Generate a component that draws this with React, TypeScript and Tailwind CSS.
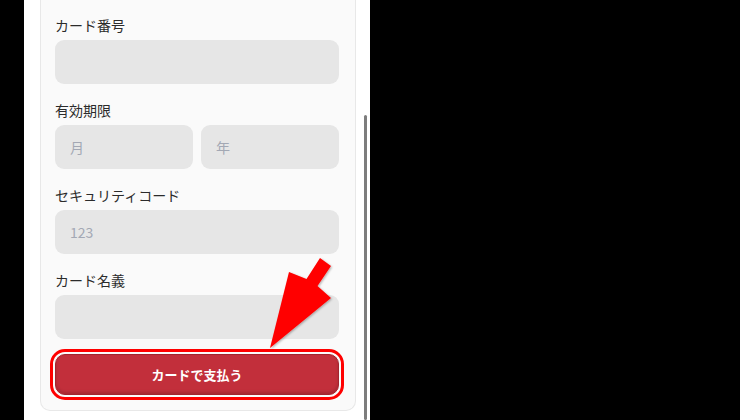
import * as React from "react";

const font = { fontFamily: '"Noto Sans CJK JP", "Noto Sans", sans-serif' };

function Field({ label, children }: { label: string; children: React.ReactNode }) {
  return (
    <div className="mb-4">
      <div className="mb-[5px] h-5 text-[14px] leading-5 text-[#2b2b2b]">{label}</div>
      {children}
    </div>
  );
}

function Input({ placeholder }: { placeholder?: string }) {
  return (
    <input
      className="h-11 w-full rounded-[9px] bg-[#e6e6e6] px-[15px] text-[14px] text-[#333] outline-none placeholder:text-[#a3a8b4]"
      placeholder={placeholder}
      style={font}
    />
  );
}

function Arrow() {
  return (
    <svg className="pointer-events-none absolute left-0 top-0" width="740" height="420">
      <defs>
        <filter id="sh" x="-20%" y="-20%" width="140%" height="140%">
          <feDropShadow dx="1" dy="1" stdDeviation="1" floodColor="#000" floodOpacity="0.3" />
        </filter>
      </defs>
      <polygon
        points="320,258 331,266 317.5,286 331,298 270,348 289,272 306.5,279"
        fill="#ff0000"
        filter="url(#sh)"
      />
    </svg>
  );
}

export default function App() {
  return (
    <div className="relative flex h-[420px] w-[740px] overflow-hidden bg-black" style={font}>
      <div className="ml-6 flex h-full w-[346px] bg-white">
        <div className="ml-4 w-[316px] self-start rounded-b-[10px] border-x border-b border-[#e8e8e8] bg-[#fafafa] pb-[15px] pl-[14px] pr-[16px] pt-[15px]">
          <Field label="カード番号">
            <Input />
          </Field>
          <Field label="有効期限">
            <div className="flex gap-2">
              <Input placeholder="月" />
              <Input placeholder="年" />
            </div>
          </Field>
          <Field label="セキュリティコード">
            <Input placeholder="123" />
          </Field>
          <Field label="カード名義">
            <Input />
          </Field>
          <button
            className="mt-[-1px] flex h-[41px] w-full items-center justify-center rounded-[10px] border border-[#a3242e] bg-[#c22f3b] text-[13px] font-bold text-white shadow-[inset_0_-2px_3px_rgba(0,0,0,0.15)] outline-[3px] outline-offset-[2px] outline-[#ff0000] outline-solid"
            style={font}
          >
            カードで支払う
          </button>
        </div>
        <div className="ml-[8px] mt-[115px] h-[305px] w-[3px] rounded-full bg-[#7d7d7d]" />
      </div>
      <Arrow />
    </div>
  );
}
